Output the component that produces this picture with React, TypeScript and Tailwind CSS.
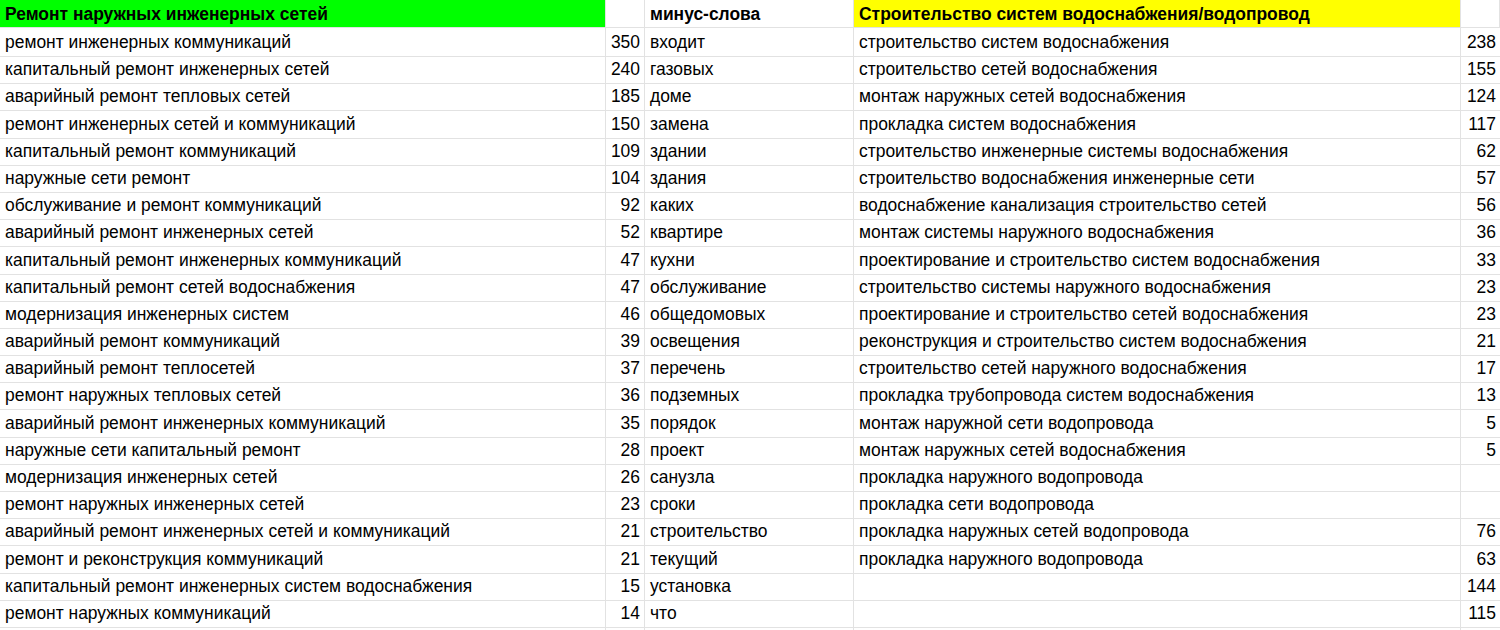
const rows: [string, string, string, string, string][] = [
  ["ремонт инженерных коммуникаций", "350", "входит", "строительство систем водоснабжения", "238"],
  ["капитальный ремонт инженерных сетей", "240", "газовых", "строительство сетей водоснабжения", "155"],
  ["аварийный ремонт тепловых сетей", "185", "доме", "монтаж наружных сетей водоснабжения", "124"],
  ["ремонт инженерных сетей и коммуникаций", "150", "замена", "прокладка систем водоснабжения", "117"],
  ["капитальный ремонт коммуникаций", "109", "здании", "строительство инженерные системы водоснабжения", "62"],
  ["наружные сети ремонт", "104", "здания", "строительство водоснабжения инженерные сети", "57"],
  ["обслуживание и ремонт коммуникаций", "92", "каких", "водоснабжение канализация строительство сетей", "56"],
  ["аварийный ремонт инженерных сетей", "52", "квартире", "монтаж системы наружного водоснабжения", "36"],
  ["капитальный ремонт инженерных коммуникаций", "47", "кухни", "проектирование и строительство систем водоснабжения", "33"],
  ["капитальный ремонт сетей водоснабжения", "47", "обслуживание", "строительство системы наружного водоснабжения", "23"],
  ["модернизация инженерных систем", "46", "общедомовых", "проектирование и строительство сетей водоснабжения", "23"],
  ["аварийный ремонт коммуникаций", "39", "освещения", "реконструкция и строительство систем водоснабжения", "21"],
  ["аварийный ремонт теплосетей", "37", "перечень", "строительство сетей наружного водоснабжения", "17"],
  ["ремонт наружных тепловых сетей", "36", "подземных", "прокладка трубопровода систем водоснабжения", "13"],
  ["аварийный ремонт инженерных коммуникаций", "35", "порядок", "монтаж наружной сети водопровода", "5"],
  ["наружные сети капитальный ремонт", "28", "проект", "монтаж наружных сетей водоснабжения", "5"],
  ["модернизация инженерных сетей", "26", "санузла", "прокладка наружного водопровода", ""],
  ["ремонт наружных инженерных сетей", "23", "сроки", "прокладка сети водопровода", ""],
  ["аварийный ремонт инженерных сетей и коммуникаций", "21", "строительство", "прокладка наружных сетей водопровода", "76"],
  ["ремонт и реконструкция коммуникаций", "21", "текущий", "прокладка наружного водопровода", "63"],
  ["капитальный ремонт инженерных систем водоснабжения", "15", "установка", "", "144"],
  ["ремонт наружных коммуникаций", "14", "что", "", "115"],
  ["", "", "", "", ""],
];

const cols = "grid grid-cols-[606px_39px_209px_607px_39px]";
const cell = "border-r border-b border-[#e2e2e2] px-[5px] whitespace-nowrap overflow-hidden";
const num = "border-b border-[#e2e2e2] pr-[4px] text-right whitespace-nowrap";

export default function App() {
  return (
    <div className="w-[1500px] h-[630px] overflow-hidden bg-white text-[17.45px] text-black font-['Liberation_Sans',Arial,sans-serif]">
      <div className={`${cols} h-[28px] font-bold leading-[29px]`}>
        <div className={`${cell} bg-[#00ff00]`}>Ремонт наружных инженерных сетей</div>
        <div className={cell}></div>
        <div className={cell}>минус-слова</div>
        <div className={`${cell} bg-[#ffff00]`}>Строительство систем водоснабжения/водопровод</div>
        <div className={cell}></div>
      </div>
      {rows.map((r, i) => (
        <div key={i} className={`${cols} h-[27.2px] leading-[28px]`}>
          <div className={cell}>{r[0]}</div>
          <div className={`${num} border-r`}>{r[1]}</div>
          <div className={cell}>{r[2]}</div>
          <div className={cell}>{r[3]}</div>
          <div className={num}>{r[4]}</div>
        </div>
      ))}
    </div>
  );
}
